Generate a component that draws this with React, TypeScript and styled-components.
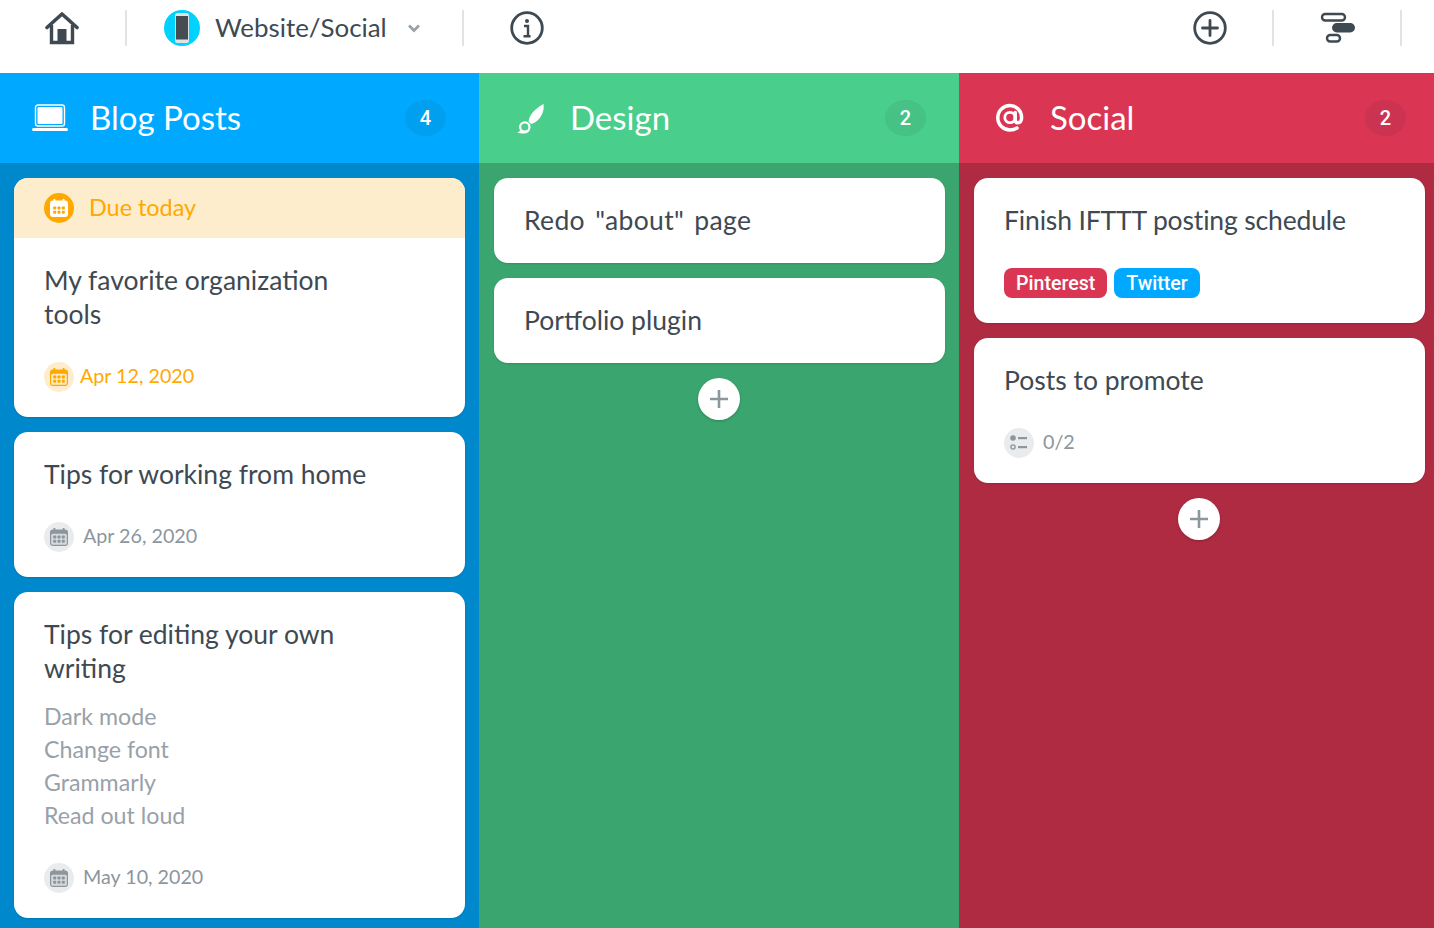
import React from 'react';
import styled, { createGlobalStyle } from 'styled-components';

const GlobalStyle = createGlobalStyle`
  html, body {
    margin: 0;
    padding: 0;
    height: 100%;
    overflow: hidden;
    background: #fff;
    font-family: 'Lato', 'Open Sans', sans-serif;
    color: #3e4952;
  }
  * {
    box-sizing: border-box;
  }
`;

const Page = styled.div`
  width: 1434px;
  height: 928px;
  overflow: hidden;
  display: flex;
  flex-direction: column;
`;

const Toolbar = styled.div`
  flex: 0 0 73px;
  display: flex;
  align-items: flex-start;
  padding-top: 10px;
  background: #fff;
`;

const ToolCell = styled.div<{ $width: number }>`
  width: ${(p) => p.$width}px;
  height: 36px;
  display: flex;
  align-items: center;
  justify-content: center;
`;

const Sep = styled.div`
  width: 2px;
  height: 36px;
  background: #e1e4e7;
`;

const Project = styled.div`
  width: 335px;
  height: 36px;
  padding-left: 37px;
  display: flex;
  align-items: center;
`;

const ProjectIcon = styled.div`
  width: 36px;
  height: 36px;
  border-radius: 50%;
  background: #00d2ff;
  display: flex;
  align-items: center;
  justify-content: center;
  margin-right: 15px;
`;

const ProjectName = styled.div`
  margin-bottom: 2px;
  font-size: 25.9px;
  line-height: 36px;
  color: #3e4952;
`;

const Chevron = styled.svg`
  margin-left: 20px;
`;

const Spacer = styled.div`
  flex: 1;
`;

const Board = styled.div`
  flex: 1;
  display: grid;
  grid-template-columns: 479px 480px 480px;
  min-height: 0;
`;

const Column = styled.section<{ $bg: string }>`
  background: ${(p) => p.$bg};
  display: flex;
  flex-direction: column;
`;

const ColumnHead = styled.header<{ $bg: string; $inset: number }>`
  flex: 0 0 90px;
  background: ${(p) => p.$bg};
  display: flex;
  align-items: center;
  padding: 0 33px 0 ${(p) => p.$inset}px;
  color: #fff;
`;

const HeadIcon = styled.div`
  width: 36px;
  height: 36px;
  margin-right: 22px;
  display: flex;
  align-items: center;
  justify-content: center;
`;

const HeadTitle = styled.h2`
  flex: 1;
  margin: 0 0 2px;
  font-size: 33px;
  font-weight: 400;
  line-height: 40px;
`;

const Count = styled.div<{ $bg: string }>`
  width: 41px;
  height: 36px;
  border-radius: 50%;
  background: ${(p) => p.$bg};
  font-family: 'Roboto', sans-serif;
  font-size: 20px;
  font-weight: 500;
  display: flex;
  align-items: center;
  justify-content: center;
`;

const CardList = styled.div<{ $inset: number }>`
  flex: 1;
  padding: 15px 14px 15px ${(p) => p.$inset}px;
  display: flex;
  flex-direction: column;
  gap: 15px;
`;

const Card = styled.article`
  background: #fff;
  border-radius: 14px;
  overflow: hidden;
  box-shadow: 0 1px 2px rgba(0, 0, 0, 0.12);
`;

const DueBanner = styled.div`
  height: 60px;
  padding: 0 30px;
  background: #feedcc;
  color: #ffa800;
  display: flex;
  align-items: center;
  font-size: 23.4px;
  gap: 15px;
`;

const DueLabel = styled.span`
  margin-bottom: 2px;
`;

const CardBody = styled.div`
  padding: 25px 30px;
`;

const Title = styled.div`
  max-width: 340px;
  padding-bottom: 1px;
  font-size: 26.5px;
  line-height: 34px;
  color: #3e4952;
`;

const WideTitle = styled(Title)`
  max-width: none;
`;

const QuotedTitle = styled(WideTitle)`
  word-spacing: 3px;
  letter-spacing: 0.35px;
`;

const TightTitle = styled(WideTitle)`
  letter-spacing: -0.15px;
`;

const Checklist = styled.ul`
  list-style: none;
  margin: 14px 0 0;
  padding: 0 0 1px;
  font-size: 23.2px;
  line-height: 33px;
  color: #98a1a8;
`;

const Meta = styled.div<{ $color: string; $gap: number }>`
  margin-top: 30px;
  height: 30px;
  display: flex;
  align-items: center;
  gap: ${(p) => p.$gap}px;
  font-size: 19.7px;
  color: ${(p) => p.$color};
`;

const MetaText = styled.span`
  margin-top: -4px;
`;

const IconDisc = styled.div<{ $bg: string; $size: number }>`
  width: ${(p) => p.$size}px;
  height: ${(p) => p.$size}px;
  border-radius: 50%;
  background: ${(p) => p.$bg};
  display: flex;
  align-items: center;
  justify-content: center;
  flex: none;
`;

const Tags = styled.div`
  margin-top: 30px;
  display: flex;
  gap: 7px;
`;

const Tag = styled.span<{ $bg: string }>`
  height: 30px;
  padding: 0 12px;
  border-radius: 8px;
  background: ${(p) => p.$bg};
  color: #fff;
  font-family: 'Roboto', sans-serif;
  font-size: 19.6px;
  font-weight: 500;
  line-height: 32px;
`;

const AddButton = styled.button`
  align-self: center;
  width: 42px;
  height: 42px;
  margin-right: 1px;
  padding: 0;
  border: 0;
  border-radius: 50%;
  background: #fff;
  box-shadow: 0 1px 3px rgba(0, 0, 0, 0.2);
  display: flex;
  align-items: center;
  justify-content: center;
`;

function HomeIcon() {
  return (
    <svg width="36" height="34" viewBox="0 0 36 34" fill="none">
      <path d="M2 16.500 17 3l15 13.500" stroke="#3e4952" strokeWidth="3.600" strokeLinecap="round" strokeLinejoin="round" />
      <path d="M6.500 14v17.500h21V14" stroke="#3e4952" strokeWidth="3.400" />
      <rect x="12.500" y="18" width="9" height="13" fill="#3e4952" />
    </svg>
  );
}

function PhoneIcon() {
  return (
    <svg width="14" height="30" viewBox="0 0 14 30">
      <rect x="0" y="0" width="14" height="30" rx="2.500" fill="#dfe3e6" />
      <rect x="1" y="3" width="12" height="23.500" fill="#454c52" />
    </svg>
  );
}

function InfoIcon() {
  return (
    <svg width="34" height="34" viewBox="0 0 34 34" fill="none">
      <circle cx="17" cy="17" r="15.300" stroke="#3e4952" strokeWidth="2.800" />
      <circle cx="17" cy="10" r="2" fill="#3e4952" />
      <path d="M14 15h4v10M13.500 25.200h7" stroke="#3e4952" strokeWidth="2.400" />
    </svg>
  );
}

function PlusCircleIcon() {
  return (
    <svg width="34" height="34" viewBox="0 0 34 34" fill="none">
      <circle cx="17" cy="17" r="15.300" stroke="#3e4952" strokeWidth="2.800" />
      <path d="M17 9.500v15M9.500 17h15" stroke="#3e4952" strokeWidth="2.800" strokeLinecap="round" />
    </svg>
  );
}

function GanttIcon() {
  return (
    <svg width="38" height="32" viewBox="-2 0 38 32" fill="none">
      <rect x="2" y="2" width="23" height="6.500" rx="3.250" stroke="#3e4952" strokeWidth="2.400" />
      <rect x="12" y="11" width="23" height="9.500" rx="4.750" fill="#3e4952" />
      <rect x="7" y="23" width="13" height="6.500" rx="3.250" stroke="#3e4952" strokeWidth="2.400" />
    </svg>
  );
}

function LaptopIcon() {
  return (
    <svg width="36" height="28" viewBox="0 0 36 28" fill="none">
      <rect x="3.500" y="1" width="29" height="21" rx="2.500" stroke="#fff" strokeWidth="1.400" />
      <rect x="5.500" y="3" width="25" height="17" rx="1" fill="#fff" />
      <rect x="0" y="24" width="36" height="3" rx="1.500" fill="#fff" />
    </svg>
  );
}

function BrushIcon() {
  return (
    <svg width="30" height="32" viewBox="0 0 30 32" fill="none">
      <path d="M28.500 2C29.500 8 27 14 23 18 20.500 20.500 18 21.500 16 22L13.500 19.500C14 15 16.500 11 20 8 22.500 6 25.500 3.500 28.500 2Z" fill="#fff" />
      <circle cx="9.800" cy="25" r="4.700" fill="#4ace8c" stroke="#fff" strokeWidth="2.200" />
      <path d="M2 30.500c1.800-.3 3-1.200 3.500-3 1.500 1.800 6 2.300 9.500 0-.8 2.500-3.200 4-6 4-2.500 0-5-.2-7-1Z" fill="#fff" />
    </svg>
  );
}

function AtIcon() {
  return (
    <svg width="32" height="32" viewBox="0 0 32 32" fill="none">
      <circle cx="16" cy="15.500" r="5.200" stroke="#fff" strokeWidth="2.800" />
      <path
        d="M21.200 10.500v7.300c0 2 1.200 3 2.600 3 2.300 0 3.800-2.200 3.800-5C27.600 8.800 22.500 3.500 16 3.500 9.400 3.500 3.800 8.800 3.800 15.800 3.800 22.800 9.400 28 16 28c2.600 0 4.800-.6 7-2"
        stroke="#fff"
        strokeWidth="3.500"
        strokeLinecap="round"
      />
    </svg>
  );
}

function CalendarIcon({ color, fill, dot }: { color: string; fill: string; dot: string }) {
  return (
    <svg width="18" height="18" viewBox="0 0 18 18">
      <rect x="3.500" y="0" width="1.800" height="3" fill={color} />
      <rect x="12.700" y="0" width="1.800" height="3" fill={color} />
      <rect x="0" y="1.500" width="18" height="16.500" rx="3" fill={color} />
      <rect x="1.200" y="5.800" width="15.600" height="11" rx="1.500" fill={fill} />
      {[0, 1].map((row) =>
        [0, 1, 2].map((col) => (
          <rect key={`${row}-${col}`} x={3.200 + col * 4.300} y={7.500 + row * 4.200} width="3" height="3" rx="0.800" fill={dot} />
        ))
      )}
    </svg>
  );
}

function ChecklistIcon() {
  return (
    <svg width="18" height="16" viewBox="0 0 18 16" fill="none">
      <circle cx="3" cy="3" r="2.800" fill="#8c969d" />
      <circle cx="3" cy="12" r="2.100" stroke="#8c969d" strokeWidth="1.400" />
      <rect x="8" y="2" width="9" height="2.200" fill="#8c969d" />
      <rect x="8" y="11" width="9" height="2.200" fill="#8c969d" />
    </svg>
  );
}

function AddCard() {
  return (
    <AddButton aria-label="Add card">
      <svg width="18" height="18" viewBox="0 0 18 18">
        <path d="M9 0v18M0 9h18" stroke="#8c969d" strokeWidth="2.600" />
      </svg>
    </AddButton>
  );
}

function DateMeta({ date, due }: { date: string; due?: boolean }) {
  const color = due ? '#ffa800' : '#8c969d';
  return (
    <Meta $color={color} $gap={due ? 6 : 9}>
      <IconDisc $bg={due ? '#feedcc' : '#e9ebed'} $size={30}>
        <CalendarIcon color={color} dot={color} fill={due ? '#ffe9bf' : '#d5d9dc'} />
      </IconDisc>
      <MetaText>{date}</MetaText>
    </Meta>
  );
}

export default function App() {
  return (
    <Page>
      <GlobalStyle />
      <Toolbar>
        <ToolCell $width={125}>
          <HomeIcon />
        </ToolCell>
        <Sep />
        <Project>
          <ProjectIcon>
            <PhoneIcon />
          </ProjectIcon>
          <ProjectName>Website/Social</ProjectName>
          <Chevron width="14" height="9" viewBox="0 0 14 9" fill="none">
            <path d="M2 1.500 7 6.500l5-5" stroke="#9aa2a8" strokeWidth="2.800" />
          </Chevron>
        </Project>
        <Sep />
        <ToolCell $width={126}>
          <InfoIcon />
        </ToolCell>
        <Spacer />
        <ToolCell $width={124}>
          <PlusCircleIcon />
        </ToolCell>
        <Sep />
        <ToolCell $width={126}>
          <GanttIcon />
        </ToolCell>
        <Sep />
        <ToolCell $width={32} />
      </Toolbar>
      <Board>
        <Column $bg="#0088cc">
          <ColumnHead $bg="#00a9ff" $inset={32}>
            <HeadIcon>
              <LaptopIcon />
            </HeadIcon>
            <HeadTitle>Blog Posts</HeadTitle>
            <Count $bg="#009ff0">4</Count>
          </ColumnHead>
          <CardList $inset={14}>
            <Card>
              <DueBanner>
                <IconDisc $bg="#ffa800" $size={30}>
                  <CalendarIcon color="#fff" fill="#fff" dot="#ffa800" />
                </IconDisc>
                <DueLabel>Due today</DueLabel>
              </DueBanner>
              <CardBody>
                <Title>My favorite organization tools</Title>
                <DateMeta date="Apr 12, 2020" due />
              </CardBody>
            </Card>
            <Card>
              <CardBody>
                <Title>Tips for working from home</Title>
                <DateMeta date="Apr 26, 2020" />
              </CardBody>
            </Card>
            <Card>
              <CardBody>
                <Title>Tips for editing your own writing</Title>
                <Checklist>
                  <li>Dark mode</li>
                  <li>Change font</li>
                  <li>Grammarly</li>
                  <li>Read out loud</li>
                </Checklist>
                <DateMeta date="May 10, 2020" />
              </CardBody>
            </Card>
          </CardList>
        </Column>
        <Column $bg="#3aa56f">
          <ColumnHead $bg="#4ace8c" $inset={33}>
            <HeadIcon>
              <BrushIcon />
            </HeadIcon>
            <HeadTitle>Design</HeadTitle>
            <Count $bg="#45c284">2</Count>
          </ColumnHead>
          <CardList $inset={15}>
            <Card>
              <CardBody>
                <QuotedTitle>Redo "about" page</QuotedTitle>
              </CardBody>
            </Card>
            <Card>
              <CardBody>
                <WideTitle>Portfolio plugin</WideTitle>
              </CardBody>
            </Card>
            <AddCard />
          </CardList>
        </Column>
        <Column $bg="#ae2b42">
          <ColumnHead $bg="#da3653" $inset={33}>
            <HeadIcon>
              <AtIcon />
            </HeadIcon>
            <HeadTitle>Social</HeadTitle>
            <Count $bg="#cc3350">2</Count>
          </ColumnHead>
          <CardList $inset={15}>
            <Card>
              <CardBody>
                <TightTitle>Finish IFTTT posting schedule</TightTitle>
                <Tags>
                  <Tag $bg="#da3653">Pinterest</Tag>
                  <Tag $bg="#00a9ff">Twitter</Tag>
                </Tags>
              </CardBody>
            </Card>
            <Card>
              <CardBody>
                <WideTitle>Posts to promote</WideTitle>
                <Meta $color="#8c969d" $gap={9}>
                  <IconDisc $bg="#e9ebed" $size={30}>
                    <ChecklistIcon />
                  </IconDisc>
                  <MetaText>0/2</MetaText>
                </Meta>
              </CardBody>
            </Card>
            <AddCard />
          </CardList>
        </Column>
      </Board>
    </Page>
  );
}
